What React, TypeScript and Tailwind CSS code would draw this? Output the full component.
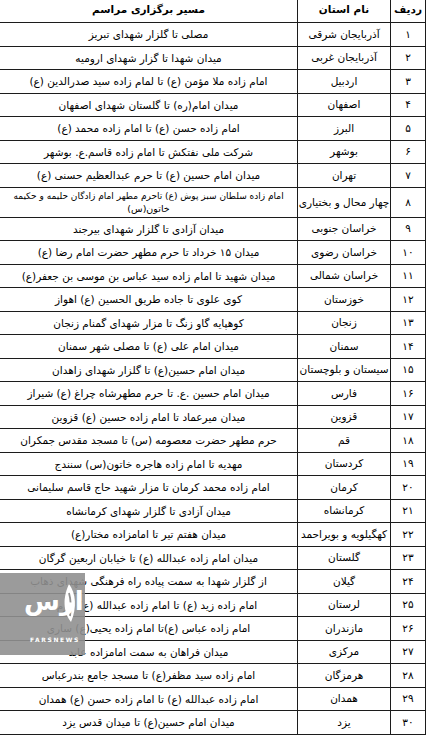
import React from "react";

const rows: [string, string, React.ReactNode][] = [
  ["۱", "آذربایجان شرقی", "مصلی تا گلزار شهدای تبریز"],
  ["۲", "آذربایجان غربی", "میدان شهدا تا گزار شهدای ارومیه"],
  ["۳", "اردبیل", "امام زاده ملا مؤمن (ع) تا لمام زاده سید صدرالدین (ع)"],
  ["۴", "اصفهان", "میدان امام(ره) تا گلستان شهدای اصفهان"],
  ["۵", "البرز", "امام زاده حسن (ع) تا امام زاده محمد (ع)"],
  ["۶", "بوشهر", "شرکت ملی نفتکش تا امام زاده قاسم.ع. بوشهر"],
  ["۷", "تهران", "میدان امام حسین (ع) تا حرم عبدالعظیم حسنی (ع)"],
  [
    "۸",
    "چهار محال و بختیاری",
    <>
      <span className="whitespace-nowrap text-[9px] tracking-[-0.2px]">امام زاده سلطان سبز پوش (ع) تاحرم مطهر امام زادگان حلیمه و حکیمه</span>
      <br />
      <span className="text-[9.5px]">خاتون(س)</span>
    </>,
  ],
  ["۹", "خراسان جنوبی", "میدان آزادی تا گلزار شهدای بیرجند"],
  ["۱۰", "خراسان رضوی", "میدان ۱۵ خرداد تا حرم مطهر حضرت امام رضا (ع)"],
  ["۱۱", "خراسان شمالی", "میدان شهید تا امام زاده سید عباس بن موسی بن جعفر(ع)"],
  ["۱۲", "خوزستان", "کوی علوی تا جاده طریق الحسین (ع) اهواز"],
  ["۱۳", "زنجان", "کوهپایه گاو زنگ تا مزار شهدای گمنام زنجان"],
  ["۱۴", "سمنان", "میدان امام علی (ع) تا مصلی شهر سمنان"],
  ["۱۵", "سیستان و بلوچستان", "میدان امام حسین(ع) تا گلزار شهدای زاهدان"],
  ["۱۶", "فارس", "میدان امام حسین .ع. تا حرم مطهرشاه چراغ (ع) شیراز"],
  ["۱۷", "قزوین", "میدان میرعماد تا امام زاده حسین (ع) قزوین"],
  ["۱۸", "قم", "حرم مطهر حضرت معصومه (س) تا مسجد مقدس جمکران"],
  ["۱۹", "کردستان", "مهدیه تا امام زاده هاجره خاتون(س) سنندج"],
  ["۲۰", "کرمان", "امام زاده محمد کرمان تا مزار شهید حاج قاسم سلیمانی"],
  ["۲۱", "کرمانشاه", "میدان آزادی تا گلزار شهدای کرمانشاه"],
  ["۲۲", "کهگیلویه و بویراحمد", "میدان هفتم تیر تا امامزاده مختار(ع)"],
  ["۲۳", "گلستان", "میدان امام زاده عبدالله (ع) تا خیابان اربعین گرگان"],
  ["۲۴", "گیلان", "از گلزار شهدا به سمت پیاده راه فرهنگی شهدای ذهاب"],
  ["۲۵", "لرستان", "امام زاده زید (ع) تا امام زاده عبدالله (ع) خرم آباد"],
  ["۲۶", "مازندران", "امام زاده عباس (ع)تا امام زاده یحیی(ع) ساری"],
  ["۲۷", "مرکزی", "میدان فراهان به سمت امامزاده عابد"],
  ["۲۸", "هرمزگان", "امام زاده سید مظفر(ع) تا مسجد جامع بندرعباس"],
  ["۲۹", "همدان", "امام زاده عبدالله (ع) تا امام زاده حسن (ع)  همدان"],
  ["۳۰", "یزد", "میدان امام حسین(ع) تا میدان قدس یزد"],
];

export default function App() {
  return (
    <div className="relative w-[426px] h-[738px] bg-white overflow-hidden">
      <div
        dir="rtl"
        className="w-[426px] text-black text-[10.5px] leading-[13px] [font-family:'DejaVu_Sans',sans-serif]"
      >
        <div className="grid grid-cols-[35px_93px_1fr] h-[23px] border-b border-r border-[#1c1c1c]">
          <div className="flex items-start justify-center pt-[3px] font-bold border-l border-[#1c1c1c]">ردیف</div>
          <div className="flex items-start justify-center pt-[3px] font-bold border-l border-[#1c1c1c]">نام استان</div>
          <div className="flex items-start justify-center pt-[3px] font-bold">مسیر برگزاری مراسم</div>
        </div>
        {rows.map(([n, p, r]) => (
          <div
            key={n}
            className={`grid grid-cols-[35px_93px_1fr] border-b border-r border-[#1c1c1c] ${n === "۸" ? "h-[30px]" : "h-[23.5px]"}`}
          >
            <div className="flex items-center justify-center border-l border-[#1c1c1c]">{n}</div>
            <div className="flex items-center justify-center border-l border-[#1c1c1c] whitespace-nowrap tracking-[-0.3px]">{p}</div>
            <div className="flex items-center justify-center text-center px-[4px] leading-[12px]">
              <div>{r}</div>
            </div>
          </div>
        ))}
      </div>
      <div className="absolute left-0 top-[573px] w-[85px] h-[82px] bg-[#909090]/90 overflow-hidden">
        <svg className="absolute left-[60px] top-[10px]" width="18" height="40" viewBox="0 0 18 40">
          <path d="M9 1 C16 10 17 25 11 39 C5 32 1 18 9 1 Z" fill="white" />
          <path d="M9 10 C11 17 11 26 10 33" stroke="#909090" strokeWidth="1.8" fill="none" />
        </svg>
        <span
          dir="rtl"
          className="absolute left-[24px] top-[10px] text-white font-bold text-[26px] leading-[36px] [font-family:'DejaVu_Sans',sans-serif]"
        >
          ارس
        </span>
        <span className="absolute left-[30px] top-[63px] text-white text-[6px] leading-[8px] tracking-[1.6px] font-bold [font-family:'DejaVu_Sans',sans-serif]">
          FARSNEWS
        </span>
      </div>
    </div>
  );
}
